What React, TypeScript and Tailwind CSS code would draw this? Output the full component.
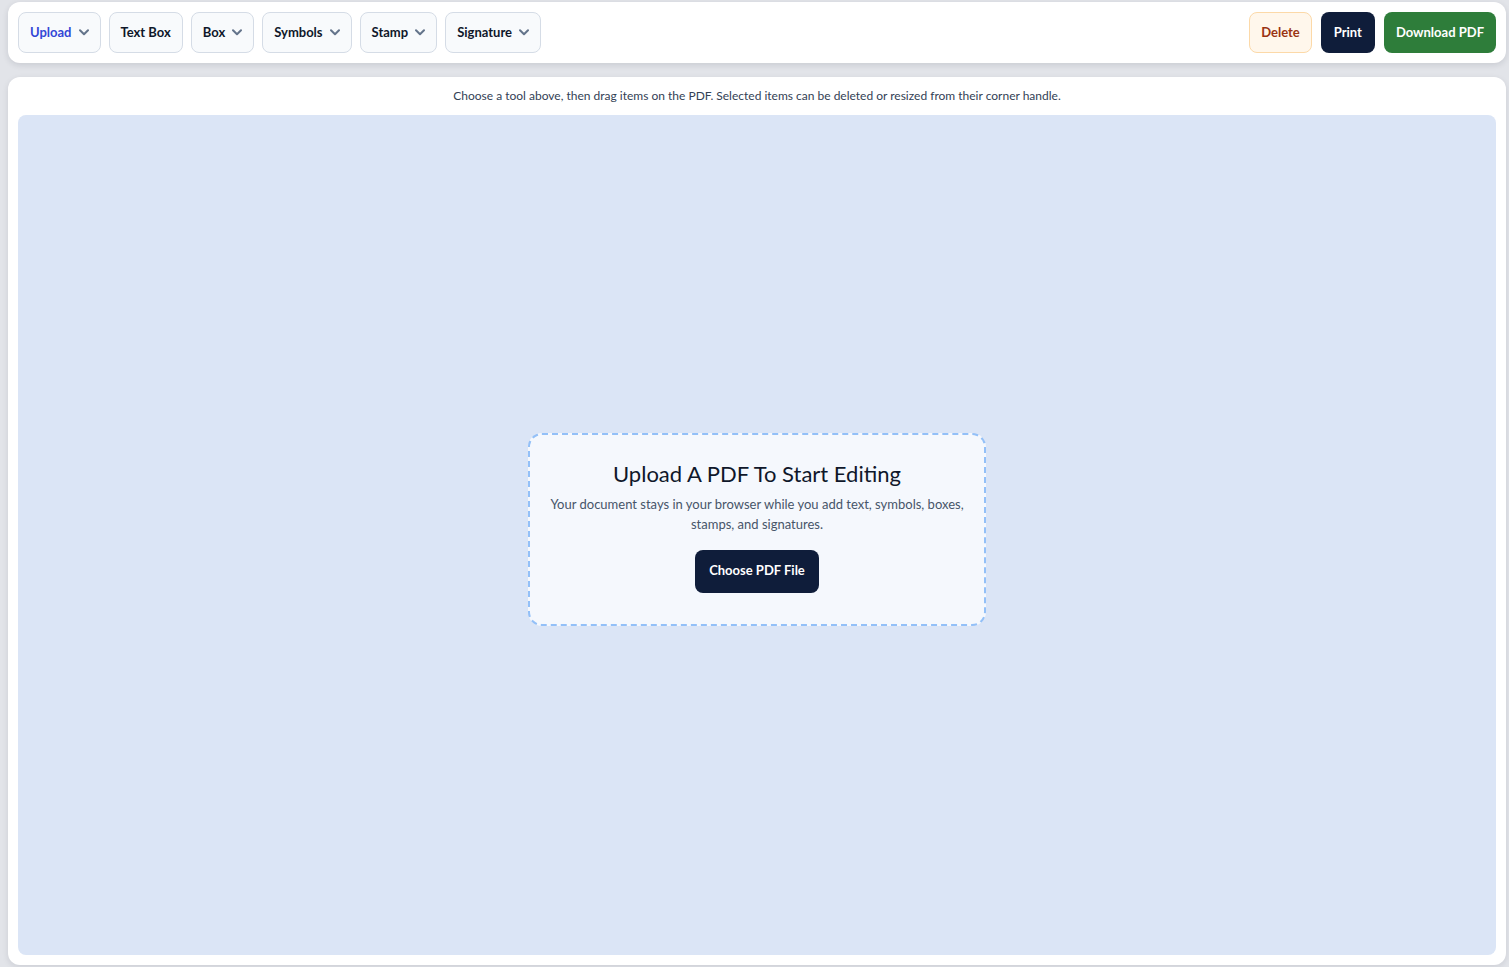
const tools = [
  { label: 'Upload', menu: true, active: true },
  { label: 'Text Box', menu: false },
  { label: 'Box', menu: true },
  { label: 'Symbols', menu: true },
  { label: 'Stamp', menu: true },
  { label: 'Signature', menu: true },
]

function Chevron() {
  return (
    <svg width="10" height="7" viewBox="0 0 10 7" fill="none" className="text-[#64748b]">
      <path d="M1 1.2 5 5.2 9 1.2" stroke="currentColor" strokeWidth="2" strokeLinecap="round" strokeLinejoin="round" />
    </svg>
  )
}

function ToolButton({ label, menu, active }: { label: string; menu: boolean; active?: boolean }) {
  return (
    <button
      className={`h-[41px] px-[11px] rounded-lg border border-[#d5dce6] bg-[#f8fafc] flex items-center gap-[7px] text-[13px] font-bold ${
        active ? 'text-[#3347d6]' : 'text-[#0f172a]'
      }`}
    >
      {label}
      {menu && <Chevron />}
    </button>
  )
}

export default function App() {
  return (
    <div className="min-h-screen bg-[#e2e4e9] pl-2 pr-[3px] pt-[2px] pb-[2px] flex flex-col gap-[14px] font-['Lato','Noto_Sans',sans-serif]">
      {/* Toolbar */}
      <div className="h-[61px] bg-white rounded-xl shadow-[0_2px_6px_rgba(15,23,42,0.12)] px-[10px] flex items-center justify-between">
        <div className="flex items-center gap-[8px]">
          {tools.map((t) => (
            <ToolButton key={t.label} {...t} />
          ))}
        </div>
        <div className="flex items-center gap-[9px]">
          <button className="h-[41px] px-[11px] rounded-lg border border-[#fcd9a8] bg-[#fff7ec] text-[#9a3412] text-[13px] font-bold">
            Delete
          </button>
          <button className="h-[41px] px-[13px] rounded-lg bg-[#0f1d3a] text-white text-[13px] font-bold">
            Print
          </button>
          <button className="h-[41px] px-3 rounded-lg bg-[#2e7d3a] text-white text-[13px] font-bold">
            Download PDF
          </button>
        </div>
      </div>

      {/* Workspace */}
      <div className="flex-1 bg-white rounded-xl shadow-[0_2px_6px_rgba(15,23,42,0.10)] px-[10px] pt-[10px] pb-[10px] flex flex-col">
        <p className="text-center text-[12px] text-[#334155] leading-[18px] mb-[10px]">
          Choose a tool above, then drag items on the PDF. Selected items can be deleted or resized from their corner handle.
        </p>
        <div className="flex-1 min-h-[840px] rounded-lg bg-[#dbe5f6] flex items-center justify-center">
          <div className="w-[458px] h-[193px] mb-[12px] rounded-[14px] border-2 border-dashed border-[#93c0f8] bg-[#f5f8fd] flex flex-col items-center pt-[24px]">
            <h2 className="text-[22px] leading-[30px] text-[#0f172a]">Upload A PDF To Start Editing</h2>
            <p className="mt-[5px] text-[13px] leading-[20px] text-[#475569] text-center px-5">
              Your document stays in your browser while you add text, symbols, boxes, stamps, and signatures.
            </p>
            <button className="mt-[16px] h-[43px] w-[124px] rounded-lg bg-[#0f1d3a] text-white text-[13px] font-bold">
              Choose PDF File
            </button>
          </div>
        </div>
      </div>
    </div>
  )
}
